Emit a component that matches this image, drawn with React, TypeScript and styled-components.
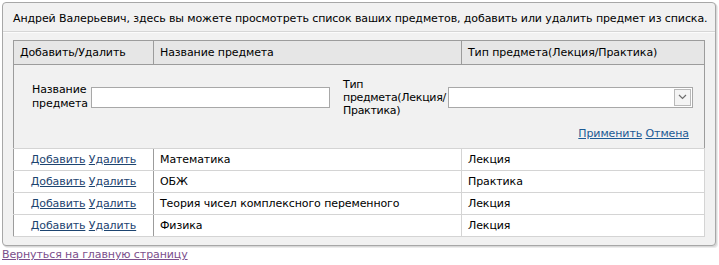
import styled, { createGlobalStyle } from "styled-components";

const GlobalStyle = createGlobalStyle`
  body {
    margin: 0;
    background: #ffffff;
    font-family: "DejaVu Sans", Verdana, sans-serif;
    font-size: 11px;
    letter-spacing: -0.1px;
    color: #000;
  }
`;

type Subject = { name: string; kind: string };

const subjects: Subject[] = [
  { name: "Математика", kind: "Лекция" },
  { name: "ОБЖ", kind: "Практика" },
  { name: "Теория чисел комплексного переменного", kind: "Лекция" },
  { name: "Физика", kind: "Лекция" },
];

function App() {
  return (
    <>
      <GlobalStyle />
      <Page>
        <Panel>
          <PanelTitle>
            Андрей Валерьевич, здесь вы можете просмотреть список ваших предметов, добавить или удалить
            предмет из списка.
          </PanelTitle>
          <PanelBody>
            <Grid>
              <colgroup>
                <col style={{ width: 140 }} />
                <col style={{ width: 308 }} />
                <col />
              </colgroup>
              <thead>
                <tr>
                  <HeadCell>Добавить/Удалить</HeadCell>
                  <HeadCell>Название предмета</HeadCell>
                  <HeadCell>Тип предмета(Лекция/Практика)</HeadCell>
                </tr>
              </thead>
              <tbody>
                <tr>
                  <FormCell colSpan={3}>
                    <FormRow>
                      <FieldLabel>
                        Название
                        <br />
                        предмета
                      </FieldLabel>
                      <TextInput type="text" />
                      <KindLabel>
                        Тип
                        <br />
                        предмета(Лекция/
                        <br />
                        Практика)
                      </KindLabel>
                      <SelectBox>
                        <SelectArrow>
                          <svg width="9" height="6" viewBox="0 0 9 6">
                            <path d="M1 1 L4.5 4.5 L8 1" fill="none" stroke="#6d6d6d" strokeWidth="1.2" />
                          </svg>
                        </SelectArrow>
                      </SelectBox>
                    </FormRow>
                    <FormActions>
                      <ActionLink href="#">Применить</ActionLink> <ActionLink href="#">Отмена</ActionLink>
                    </FormActions>
                  </FormCell>
                </tr>
                {subjects.map((s) => (
                  <tr key={s.name}>
                    <LinkCell>
                      <RowLink href="#">Добавить</RowLink> <RowLink href="#">Удалить</RowLink>
                    </LinkCell>
                    <DataCell>{s.name}</DataCell>
                    <DataCell>{s.kind}</DataCell>
                  </tr>
                ))}
              </tbody>
            </Grid>
          </PanelBody>
        </Panel>
        <BackLink href="#">Вернуться на главную страницу</BackLink>
      </Page>
    </>
  );
}

const Page = styled.div`
  padding: 2px 0 0 2px;
  width: 714px;
`;

const Panel = styled.section`
  border: 1px solid #a7a7a7;
  border-radius: 4px;
  background: #f1f1f1;
  box-shadow: 1px 1px 0 #d8d8d8, 2px 2px 0 #ececec;
`;

const PanelTitle = styled.div`
  height: 28px;
  line-height: 31px;
  padding-left: 10px;
  white-space: nowrap;
  border-bottom: 1px solid #d6d6d6;
  box-shadow: 0 1px 0 #fbfbfb;
`;

const PanelBody = styled.div`
  padding: 8px 10px 8px 10px;
`;

const Grid = styled.table`
  width: 100%;
  border-collapse: collapse;
  border: 1px solid #9c9c9c;
  table-layout: fixed;
`;

const HeadCell = styled.th`
  height: 23px;
  padding: 0 6px;
  text-align: left;
  font-weight: normal;
  background: #e6e6e6;
  border: 1px solid #9c9c9c;
  border-top: none;
`;

const FormCell = styled.td`
  height: 83px;
  padding: 0;
  background: #f1f1f1;
  border-bottom: 1px solid #d4d4d4;
  vertical-align: top;
`;

const FormRow = styled.div`
  display: flex;
  align-items: center;
  padding: 12px 0 0 18px;
  height: 40px;
`;

const FieldLabel = styled.div`
  width: 59px;
  line-height: 14px;
`;

const TextInput = styled.input`
  box-sizing: border-box;
  width: 239px;
  height: 21px;
  margin: 0;
  border: 1px solid #a8a8a8;
  background: #fff;
`;

const KindLabel = styled.div`
  width: 105px;
  margin-left: 13px;
  line-height: 13px;
  letter-spacing: -0.3px;
  white-space: nowrap;
`;

const SelectBox = styled.div`
  box-sizing: border-box;
  width: 245px;
  height: 21px;
  border: 1px solid #a8a8a8;
  background: #fff;
  display: flex;
  justify-content: flex-end;
  align-items: center;
  padding-right: 1px;
`;

const SelectArrow = styled.div`
  box-sizing: border-box;
  width: 17px;
  height: 17px;
  border: 1px solid #b9b9b9;
  background: #f4f4f4;
  display: flex;
  align-items: center;
  justify-content: center;
`;

const FormActions = styled.div`
  text-align: right;
  padding: 10px 15px 0 0;
`;

const ActionLink = styled.a`
  color: #1c5a95;
  text-decoration: underline;
`;

const LinkCell = styled.td`
  height: 21px;
  padding: 0;
  text-align: center;
  background: #fff;
  border: 1px solid #d4d4d4;
  border-left: none;
  border-right: 1px solid #9c9c9c;
`;

const DataCell = styled.td`
  height: 21px;
  padding: 0 6px;
  background: #fff;
  border: 1px solid #d4d4d4;
  border-left: 1px solid #9c9c9c;
  white-space: nowrap;
`;

const RowLink = styled.a`
  color: #1d4470;
  text-decoration: underline;
`;

const BackLink = styled.a`
  display: inline-block;
  margin-top: 2px;
  color: #7b4f8c;
  text-decoration: underline;
`;

export default App;
